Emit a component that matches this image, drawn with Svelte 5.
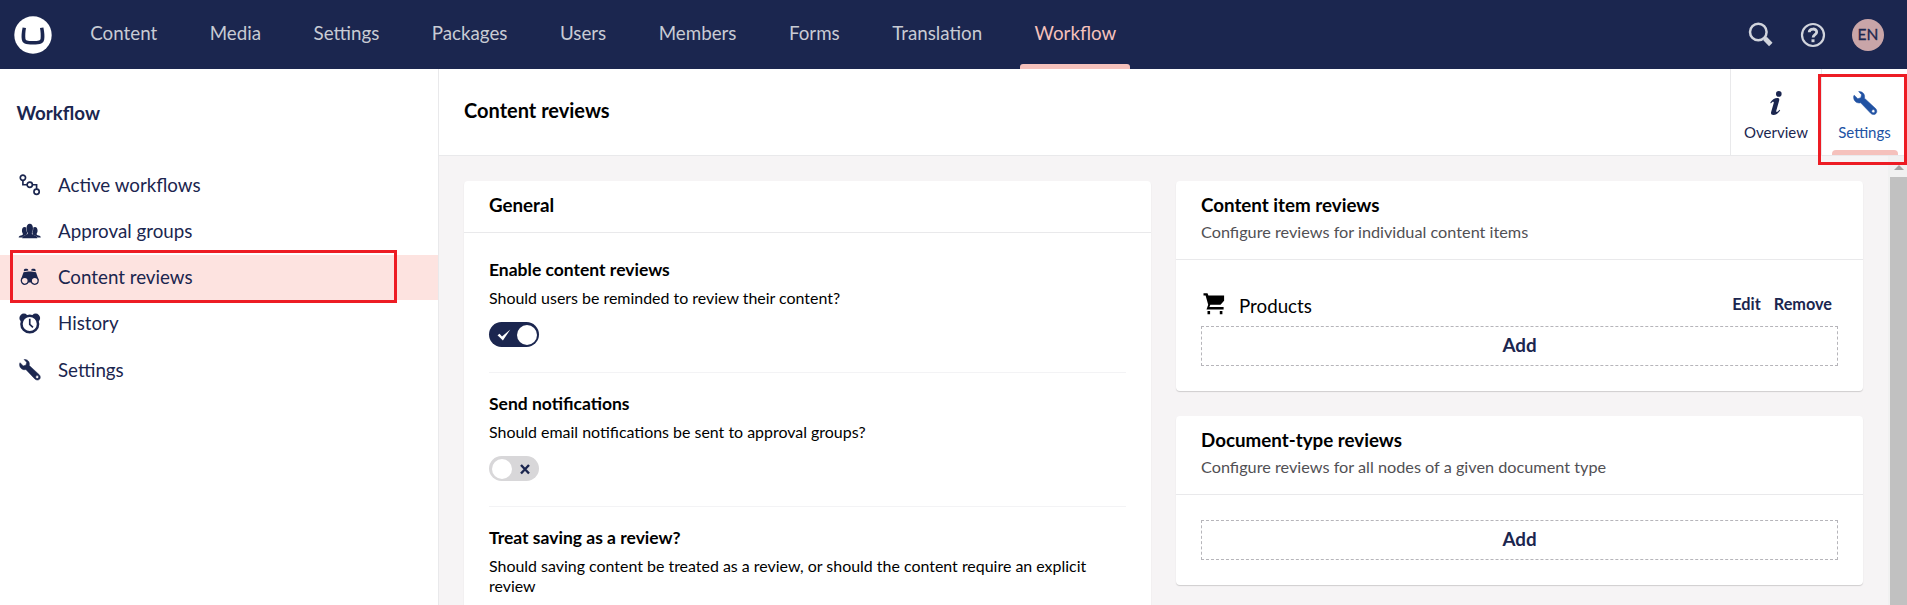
<script>
  const sections = ['Content', 'Media', 'Settings', 'Packages', 'Users', 'Members', 'Forms', 'Translation', 'Workflow'];
  const tree = [
    { label: 'Active workflows', icon: 'flow' },
    { label: 'Approval groups', icon: 'users' },
    { label: 'Content reviews', icon: 'binoculars', active: true },
    { label: 'History', icon: 'alarm' },
    { label: 'Settings', icon: 'wrench' }
  ];
  const options = [
    { title: 'Enable content reviews', text: 'Should users be reminded to review their content?', on: true },
    { title: 'Send notifications', text: 'Should email notifications be sent to approval groups?', on: false },
    { title: 'Treat saving as a review?', text: 'Should saving content be treated as a review, or should the content require an explicit review', on: false }
  ];
  const reviews = [
    { title: 'Content item reviews', text: 'Configure reviews for individual content items', items: ['Products'] },
    { title: 'Document-type reviews', text: 'Configure reviews for all nodes of a given document type', items: [] }
  ];
</script>

{#snippet icon(name)}
  {#if name === 'flow'}
    <svg viewBox="0 0 22 22" fill="none" stroke="currentColor" stroke-width="1.7">
      <circle cx="4" cy="3.8" r="2.7" /><circle cx="11" cy="11" r="2.7" /><circle cx="18" cy="18.2" r="2.7" />
      <path d="M4 6.500V11h4.300M13.700 11H18v4.500" />
    </svg>
  {:else if name === 'users'}
    <svg viewBox="0 0 22 22" fill="currentColor">
      <path d="M-.3 17.800c0-1.200.8-1.500 2.200-1.900 1.400-.4 2.100-.8 2.100-1.700 0-.6-1-1.400-1-3.300 0-2.300.9-3.800 2.700-3.800.7 0 1.300.2 1.700.7-.1 2.100.3 3.900 1 5.100l-.6 2.200c-1.800.6-3.600 1.200-4.700 2.700z" />
      <path d="M22.300 17.800c0-1.200-.8-1.500-2.200-1.900-1.400-.4-2.100-.8-2.100-1.700 0-.6 1-1.400 1-3.300 0-2.300-.9-3.800-2.700-3.800-.7 0-1.300.2-1.700.7.1 2.100-.3 3.900-1 5.100l.6 2.200c1.800.6 3.600 1.200 4.700 2.700z" />
      <path d="M3.200 18.800c.1-2.300 1.600-2.800 3.800-3.500 1.300-.4 1.900-.8 1.900-1.700 0-.9-1.200-2-1.200-4.900 0-3.100 1.200-4.900 3.300-4.900s3.300 1.800 3.300 4.900c0 2.900-1.200 4-1.200 4.900 0 .9.600 1.300 1.900 1.700 2.200.7 3.700 1.200 3.800 3.500z" />
    </svg>
  {:else if name === 'binoculars'}
    <svg viewBox="0 0 22 22" fill="currentColor">
      <path d="M5 4c0-1.700 4.500-1.700 4.500 0v.6L5 5.400zM12.500 4c0-1.700 4.500-1.700 4.500 0v1.400l-4.500-.8z" />
      <path d="M4.600 6.300 9.500 5.500h3l4.900.8 2.800 8.200-7.700 2.500h-3L1.800 14.500z" />
      <circle cx="5.900" cy="15.200" r="3.500" fill="#fde3e0" stroke="currentColor" stroke-width="1.300" />
      <circle cx="16.100" cy="15.200" r="3.500" fill="#fde3e0" stroke="currentColor" stroke-width="1.300" />
    </svg>
  {:else if name === 'alarm'}
    <svg viewBox="0 0 22 22">
      <circle cx="5" cy="5.200" r="4.600" fill="currentColor" /><circle cx="17" cy="5.200" r="4.600" fill="currentColor" />
      <circle cx="11" cy="11.300" r="8.500" fill="#fff" stroke="currentColor" stroke-width="2.600" />
      <path d="M11 6v5.600l3.300 3" fill="none" stroke="currentColor" stroke-width="1.700" />
    </svg>
  {:else if name === 'wrench'}
    <svg viewBox="0 0 22 22" fill="currentColor" fill-rule="evenodd" stroke="currentColor" stroke-width=".5" stroke-linejoin="round">
      <path d="M5.200.5C8.900.2 11.300 3 10.500 6.600l10.200 9.500c1.500 1.500 1.400 3.600.2 4.700-1.300 1.200-3.300 1-4.700-.4L7 10.800C3.400 11.700.2 9 .6 4.800l.5-1 3.300 3.300 2.800-1 .6-2.700zM18.600 17a1.500 1.500 0 1 0 0 3 1.500 1.500 0 0 0 0-3z" />
    </svg>
  {/if}
{/snippet}

<div class="page">
  <header>
    <svg class="logo" viewBox="0 0 38 38">
      <circle cx="19" cy="19" r="18.700" fill="#fff" />
      <path d="M8.600 11.500 12 12c-.7 3.800-.9 7.700-.6 10.500.3 2.100 1.600 2.600 7.600 2.600s7.300-.5 7.600-2.600c.3-2.800.1-6.700-.6-10.500l3.400-.5c1 5 1.300 8.700.8 12.100-.7 4-3.400 5-11.200 5s-10.500-1-11.200-5c-.5-3.400-.2-7.100.8-12.100z" fill="#1b264f" />
    </svg>
    <nav>
      {#each sections as name}
        <a class:current={name === 'Workflow'}>{name}</a>
      {/each}
    </nav>
    <div class="tools">
      <svg width="25" height="25" viewBox="0 0 25 25" fill="none" stroke="#d1d4dc">
        <circle cx="10.300" cy="10" r="8.300" stroke-width="2.500" /><path d="m16 15.500 1.500 1.500" stroke-width="3" /><path d="m17 16.500 5.800 6" stroke-width="4.800" />
      </svg>
      <svg width="26" height="26" viewBox="0 0 26 26" fill="none" stroke="#d1d4dc">
        <circle cx="13" cy="13" r="11" stroke-width="2.200" />
        <path d="M9.200 10.300c.2-4.400 7.500-4.200 7.500-.4 0 2.600-3.600 2.700-3.600 5.600" stroke-width="2.800" /><path d="M13 17.300v2.900" stroke-width="3" />
      </svg>
      <span class="avatar">EN</span>
    </div>
  </header>

  <div class="shell">
    <aside>
      <h1>Workflow</h1>
      <ul>
        {#each tree as node}
          <li class:active={node.active}><span class="icon">{@render icon(node.icon)}</span><span class="label">{node.label}</span></li>
        {/each}
      </ul>
      <div class="mark tree-mark"></div>
    </aside>

    <main>
      <div class="bar">
        <h2>Content reviews</h2>
        <div class="app">
          <svg viewBox="0 0 24 24" fill="#1b264f">
            <circle cx="14.800" cy="2.900" r="2.800" />
            <path d="M6.300 11.600c2.200-3.500 4.500-4.600 7-4.600 2 0 2.200 1.200 1.800 2.700l-2.700 9.600c-.3 1.100-.2 1.700.3 1.700.8 0 1.900-1.100 2.800-2.300l.7.500c-2 3.500-4.400 4.800-6.800 4.800-2.200 0-2.800-1.200-2.200-3.300l2.400-8.300c.3-1 .3-1.600-.3-1.600-.8 0-1.600.7-2.400 1.600z" />
          </svg>
          <span>Overview</span>
        </div>
        <div class="app selected">{@render icon('wrench')}<span>Settings</span></div>
        <div class="mark app-mark"></div>
      </div>

      <div class="body">
        <div class="columns">
          <section class="card general">
            <div class="card-head"><h3>General</h3></div>
            <div class="options">
              {#each options as option}
                <div class="option">
                  <h4>{option.title}</h4>
                  <p>{option.text}</p>
                  <div class="toggle" class:on={option.on}>
                    {#if option.on}
                      <svg viewBox="0 0 14 12"><path d="M.5 6.300 2.600 4.800 5 7.500 13.300.5 5.900 11.500z" fill="#fff" /></svg>
                    {:else}
                      <svg viewBox="0 0 14 12"><path d="m3 2 8 8.500M11 2l-8 8.500" stroke="#1b264f" stroke-width="2.400" /></svg>
                    {/if}
                    <i></i>
                  </div>
                </div>
              {/each}
            </div>
          </section>

          <div class="stack">
            {#each reviews as review}
              <section class="card">
                <div class="card-head"><h3>{review.title}</h3><p>{review.text}</p></div>
                <div class="picker">
                  {#each review.items as item}
                    <div class="item">
                      <svg viewBox="0 0 22 22">
                        <path d="M.5.300h4l.9 2.200h15.700v5.200l-3.600 4H7.300l-.9 2.200h14.200v2.500H3.500l1.700-4.600L2.600 2.500H.500z" fill="#000" />
                        <path d="M4.500 18h2.600v3.200H4.500zM16.800 18h2.600v3.200h-2.600z" fill="#000" />
                      </svg>
                      <span>{item}</span><b>Edit</b><b>Remove</b>
                    </div>
                  {/each}
                  <div class="add">Add</div>
                </div>
              </section>
            {/each}
          </div>
        </div>
        <div class="scroll"><div class="arrow"></div></div>
      </div>
    </main>
  </div>
</div>

<style>
  :global(body) { margin: 0; }
  .page { width: 1907px; height: 605px; overflow: hidden; display: flex; flex-direction: column; font-family: Lato, sans-serif; font-size: 18.75px; color: #1b264f; background: #fff; }
  h1, h2, h3, h4, p, ul { margin: 0; padding: 0; }
  h1, h2, h3, h4 { font-size: 18.75px; line-height: 25px; font-weight: 700; }
  svg { display: block; flex: none; overflow: visible; }
  header { height: 69px; flex: none; background: #1b264f; display: flex; align-items: center; box-sizing: border-box; padding: 0 23px 0 14px; }
  .logo { width: 38px; height: 38px; }
  nav { display: flex; align-self: stretch; margin-left: 12px; }
  nav a { display: flex; position: relative; padding: 0 26.25px; color: #c8cbd4; line-height: 65px; }
  nav a.current { color: #f5c1bc; }
  nav a.current::after { content: ''; position: absolute; left: 12px; right: 12px; bottom: 0; height: 5px; background: #f5c1bc; border-radius: 3px 3px 0 0; }
  .tools { margin-left: auto; display: flex; align-items: center; gap: 27px; }
  .avatar { width: 32px; height: 32px; border-radius: 50%; background: #c9a5a8; font-size: 15.5px; line-height: 31px; text-align: center; margin-left: -1px; -webkit-text-stroke: .3px #1b264f; }
  .shell { display: flex; flex: 1; min-height: 0; }
  aside { width: 438px; flex: none; border-right: 1px solid #e9e9eb; position: relative; }
  h1 { padding: 31px 17px 0 16.5px; }
  ul { list-style: none; margin-top: 37px; }
  li { height: 45px; margin-bottom: 1.25px; display: flex; align-items: center; }
  .label { line-height: 25px; padding-bottom: 1px; }
  li.active { background: #fde3e0; }
  .icon { width: 21.5px; margin: 0 17.5px 0 19px; }
  .icon :global(svg) { width: 21.5px; height: 21.5px; }
  .mark { position: absolute; border: 3px solid #ed1c24; box-sizing: border-box; }
  .tree-mark { left: 10px; top: 181px; width: 387px; height: 53px; }
  .app-mark { right: 0; top: 5px; width: 89px; height: 91px; z-index: 2; }
  main { flex: 1; min-width: 0; display: flex; flex-direction: column; color: #000; }
  .bar { height: 86px; flex: none; border-bottom: 1px solid #e9e9eb; display: flex; position: relative; box-sizing: content-box; margin-bottom: -1px; z-index: 1; }
  h2 { flex: 1; padding-left: 25px; font-size: 20px; line-height: 83px; }
  .app { width: 91px; border-left: 1px solid #e9e9eb; display: flex; flex-direction: column; align-items: center; position: relative; font-size: 15px; line-height: 20px; color: #1b264f; padding-top: 22px; box-sizing: border-box; height: 86px; }
  .app svg { width: 24px; height: 24px; margin-bottom: 7px; }
  .app.selected { width: 86px; color: #2152a3; }
  .app.selected::after { content: ''; position: absolute; left: 10px; width: 66px; bottom: 0; height: 5px; background: #f5c1bc; border-radius: 4px 4px 0 0; }
  .body { flex: 1; min-height: 0; display: flex; background: #f6f4f5; }
  .columns { flex: 1; display: flex; align-items: flex-start; gap: 25px; padding: 26px 25px 0; }
  .card { background: #fff; border-radius: 4px; box-shadow: 0 1px 1px rgba(0, 0, 0, .16); }
  .general { width: 687px; flex: none; }
  .card-head { padding: 11px 25px 15px; border-bottom: 1px solid #e9e9eb; }
  .card-head p { color: #515054; font-size: 16.25px; line-height: 20px; margin-top: 5px; padding-bottom: 2px; }
  .options { padding: 6px 25px 0; }
  .option { padding: 18px 0 25px; border-bottom: 1px solid #f3f3f5; }
  h4 { font-size: 17.5px; }
  .option p { font-size: 15.95px; line-height: 20px; margin: 6px 0 14px; }
  .toggle { width: 50px; height: 25px; border-radius: 13px; background: #d8d7d9; display: flex; flex-direction: row-reverse; align-items: center; justify-content: space-between; box-sizing: border-box; padding: 0 7px 0 3px; }
  .toggle.on { background: #1b264f; flex-direction: row; padding: 0 2px 0 8px; }
  .toggle i { width: 20px; height: 20px; border-radius: 50%; background: #fff; }
  .toggle svg { width: 14px; height: 12px; }
  .stack { flex: 1; display: flex; flex-direction: column; gap: 25px; }
  .picker { padding: 25px; }
  .item { display: flex; height: 41px; align-items: flex-start; line-height: 25px; padding: 0 6px 0 2px; box-sizing: border-box; }
  .item svg { width: 22px; height: 22px; margin-top: 8px; }
  .item span { flex: 1; padding: 8px 0 0 14px; }
  .item b { font-size: 16.25px; padding-top: 6px; margin-left: 13px; color: #1b264f; }
  .add { height: 40px; box-sizing: border-box; border: 1px dashed #b6b5ba; text-align: center; font-weight: 700; line-height: 36px; color: #1b264f; }
  .scroll { width: 17px; border-left: 2px solid #f1f1f1; background: #c1c1c1; }
  .arrow { height: 22px; background: #f1f1f1; display: flex; align-items: flex-start; justify-content: center; }
  .arrow::after { content: ''; margin-top: 10px; border: 5px solid transparent; border-top: 0; border-bottom-color: #a3a3a3; }
</style>
